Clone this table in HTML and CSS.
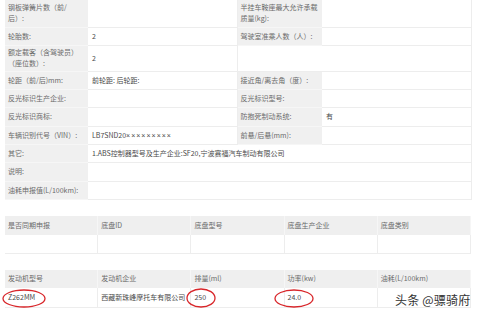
FILE: index.html
```html
<!DOCTYPE html>
<html>
<head>
<meta charset="utf-8">
<link rel="stylesheet" href="styles.css">
</head>
<body>
<div class="page">
  <table class="spec">
    <colgroup><col class="c1"><col class="c2"><col class="c3"><col class="c4"></colgroup>
    <tr class="r27"><td class="lab">钢板弹簧片数（前/<br>后）:</td><td class="val"></td><td class="lab">半挂车鞍座最大允许承载<br>质量(kg):</td><td class="val"></td></tr>
    <tr class="r18"><td class="lab">轮胎数:</td><td class="val">2</td><td class="lab">驾驶室准乘人数（人）:</td><td class="val"></td></tr>
    <tr class="r26"><td class="lab">额定载客（含驾驶员）<br>（座位数）:</td><td class="val">2</td><td class="val" colspan="2"></td></tr>
    <tr class="r18"><td class="lab">轮距（前/后)mm:</td><td class="val">前轮距: 后轮距:</td><td class="lab">接近角/离去角（度）:</td><td class="val"></td></tr>
    <tr class="r18"><td class="lab">反光标识生产企业:</td><td class="val"></td><td class="lab">反光标识型号:</td><td class="val"></td></tr>
    <tr class="r19"><td class="lab">反光标识商标:</td><td class="val"></td><td class="lab">防抱死制动系统:</td><td class="val">有</td></tr>
    <tr class="r18"><td class="lab">车辆识别代号（VIN）:</td><td class="val">LB7SND20<span class="x">×××××××××</span></td><td class="lab">前悬/后悬(mm):</td><td class="val"></td></tr>
    <tr class="r18"><td class="lab">其它:</td><td class="val" colspan="3">1.ABS控制器型号及生产企业:SF20,宁波赛福汽车制动有限公司</td></tr>
    <tr class="r19"><td class="lab">说明:</td><td class="val" colspan="3"></td></tr>
    <tr class="r18"><td class="lab">油耗申报值(L/100km):</td><td class="val" colspan="3"></td></tr>
  </table>

  <table class="grid g2">
    <tr class="head"><td>是否同期申报</td><td>底盘ID</td><td>底盘型号</td><td>底盘生产企业</td><td>底盘类别</td></tr>
    <tr class="data"><td></td><td></td><td></td><td></td><td></td></tr>
  </table>

  <table class="grid g3">
    <tr class="head"><td>发动机型号</td><td>发动机企业</td><td>排量(ml)</td><td>功率(kw)</td><td>油耗(L/100km)</td></tr>
    <tr class="data"><td>Z262MM</td><td>西藏新珠峰摩托车有限公司</td><td>250</td><td>24.0</td><td></td></tr>
  </table>

  <svg class="marks" width="480" height="318" viewBox="0 0 480 318">
    <ellipse cx="24" cy="298.5" rx="21" ry="8.5" />
    <ellipse cx="201" cy="298" rx="14" ry="9" />
    <ellipse cx="294" cy="298.5" rx="19" ry="8.5" />
  </svg>
  <div class="wm">头条 @骠骑府</div>
</div>
</body>
</html>
```

FILE: styles.css
```css
html, body {
  margin: 0;
  padding: 0;
  background: #fff;
}
body {
  font-family: "Noto Sans CJK SC", "Noto Sans", sans-serif;
  font-size: 7px;
  color: #555;
}
.page {
  position: relative;
  width: 480px;
  height: 318px;
  overflow: hidden;
  padding-left: 5px;
  box-sizing: border-box;
}
table {
  border-collapse: collapse;
  table-layout: fixed;
  width: 466px;
}
td {
  padding: 0 0 0 3px;
  vertical-align: middle;
  line-height: 11px;
  white-space: nowrap;
  overflow: visible;
}
.spec .c1 { width: 83px; }
.spec .c2 { width: 149px; }
.spec .c3 { width: 85px; }
.spec .c4 { width: 149px; }
.spec td {
  border-top: 1px solid #ededed;
  border-bottom: 1px solid #ededed;
}
.spec .lab {
  background: #f0f0f0;
  color: #6a6a6a;
  border-color: #f6f6f6;
}
.spec .val {
  color: #4a4a4a;
  padding-left: 4px;
  border-right: 1px solid #ededed;
}
.spec tr:first-child td { border-top: none; }
.x {
  font-family: "Liberation Sans", sans-serif;
  font-size: 7px;
  letter-spacing: 1px;
}
.r27 { height: 27px; }
.r26 { height: 26px; }
.r18 { height: 18px; }
.r19 { height: 19px; }

.grid td {
  width: 20%;
  color: #6a6a6a;
}
.g2 { margin-top: 16px; }
.g3 { margin-top: 16px; }
.grid .head td {
  background: #efefef;
  height: 19px;
  border-right: 1px solid #f6f6f6;
}
.grid .data td {
  height: 18px;
  color: #4a4a4a;
  border-right: 1px solid #ededed;
  border-bottom: 1px solid #ededed;
}
.g3 .head td { height: 18px; }
.g3 .data td { height: 19px; }

.marks {
  position: absolute;
  left: 0;
  top: 0;
  pointer-events: none;
}
.marks ellipse {
  fill: none;
  stroke: #d8262a;
  stroke-width: 1.3;
}
.wm {
  position: absolute;
  left: 395px;
  top: 292px;
  font-size: 12px;
  line-height: 16px;
  color: #333;
  letter-spacing: 0.2px;
  text-shadow: 0 0 2px #fff, 0 0 2px #fff;
}
```
